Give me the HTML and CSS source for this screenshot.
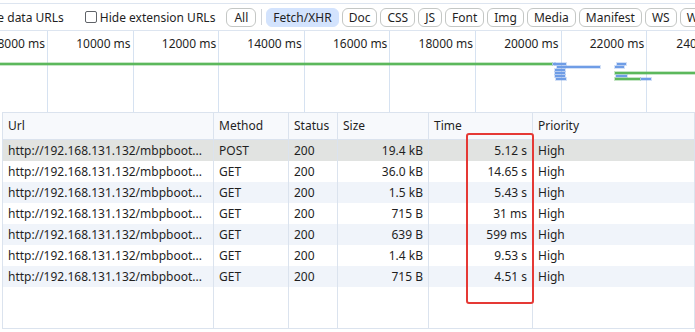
FILE: index.html
```html
<!DOCTYPE html>
<html>
<head>
<meta charset="utf-8">
<link rel="stylesheet" href="styles.css">
</head>
<body>
<div class="panel">
  <div class="toolbar">
    <label class="check first"><span class="box"></span><span>Hide data URLs</span></label>
    <label class="check"><span class="box"></span><span>Hide extension URLs</span></label>
    <span class="chip wide">All</span>
    <span class="sep"></span>
    <span class="chip active">Fetch/XHR</span>
    <span class="chip">Doc</span>
    <span class="chip">CSS</span>
    <span class="chip">JS</span>
    <span class="chip">Font</span>
    <span class="chip">Img</span>
    <span class="chip">Media</span>
    <span class="chip">Manifest</span>
    <span class="chip">WS</span>
    <span class="chip">Wasm</span>
  </div>
  <div class="overview">
    <div class="ruler">
      <div class="tick first"><span>8000 ms</span></div>
      <div class="tick"><span>10000 ms</span></div>
      <div class="tick"><span>12000 ms</span></div>
      <div class="tick"><span>14000 ms</span></div>
      <div class="tick"><span>16000 ms</span></div>
      <div class="tick"><span>18000 ms</span></div>
      <div class="tick"><span>20000 ms</span></div>
      <div class="tick"><span>22000 ms</span></div>
      <div class="tick last"><span>24000 ms</span></div>
    </div>
    <div class="bar green" style="left:0;top:32px;width:552px"></div>
    <div class="bar blue" style="left:553px;top:32px;width:2px"></div>
    <div class="bar blue" style="left:555px;top:32px;width:11px"></div>
    <div class="bar blue" style="left:557px;top:35px;width:43px"></div>
    <div class="bar blue" style="left:555px;top:38px;width:10px"></div>
    <div class="bar blue" style="left:555px;top:41px;width:10px"></div>
    <div class="bar blue" style="left:555px;top:44px;width:10px"></div>
    <div class="bar blue" style="left:556px;top:47px;width:10px"></div>
    <div class="bar blue" style="left:617px;top:32px;width:9px"></div>
    <div class="bar blue" style="left:615px;top:35px;width:9px"></div>
    <div class="bar green" style="left:615px;top:41px;width:80px"></div>
    <div class="bar blue" style="left:616px;top:44px;width:11px"></div>
    <div class="bar green" style="left:615px;top:47px;width:25px"></div>
    <div class="bar blue" style="left:641px;top:47px;width:10px"></div>
  </div>
  <div class="grid-wrap">
    <table class="grid">
      <colgroup>
        <col class="c-url"><col class="c-method"><col class="c-status"><col class="c-size"><col class="c-time"><col>
      </colgroup>
      <thead>
        <tr><th>Url</th><th>Method</th><th>Status</th><th>Size</th><th>Time</th><th>Priority</th></tr>
      </thead>
      <tbody>
        <tr class="selected"><td>http://192.168.131.132/mbpboot...</td><td>POST</td><td>200</td><td class="num">19.4 kB</td><td class="num">5.12 s</td><td>High</td></tr>
        <tr><td>http://192.168.131.132/mbpboot...</td><td>GET</td><td>200</td><td class="num">36.0 kB</td><td class="num">14.65 s</td><td>High</td></tr>
        <tr class="stripe"><td>http://192.168.131.132/mbpboot...</td><td>GET</td><td>200</td><td class="num">1.5 kB</td><td class="num">5.43 s</td><td>High</td></tr>
        <tr><td>http://192.168.131.132/mbpboot...</td><td>GET</td><td>200</td><td class="num">715 B</td><td class="num">31 ms</td><td>High</td></tr>
        <tr class="stripe"><td>http://192.168.131.132/mbpboot...</td><td>GET</td><td>200</td><td class="num">639 B</td><td class="num">599 ms</td><td>High</td></tr>
        <tr><td>http://192.168.131.132/mbpboot...</td><td>GET</td><td>200</td><td class="num">1.4 kB</td><td class="num">9.53 s</td><td>High</td></tr>
        <tr class="stripe"><td>http://192.168.131.132/mbpboot...</td><td>GET</td><td>200</td><td class="num">715 B</td><td class="num">4.51 s</td><td>High</td></tr>
        <tr class="filler"><td></td><td></td><td></td><td></td><td></td><td></td></tr>
      </tbody>
    </table>
    <div class="highlight"></div>
  </div>
</div>
</body>
</html>
```
FILE: styles.css
```css
* { box-sizing: border-box; }
html, body { margin: 0; padding: 0; background: #fff; }
body {
  width: 695px;
  height: 332px;
  overflow: hidden;
  font-family: "Noto Sans", "Noto Sans CJK SC", sans-serif;
  font-size: 12px;
  color: #1f1f1f;
}
.panel { padding-top: 3px; }
.toolbar {
  height: 28px;
  border-top: 1px solid #dde5f0;
  border-bottom: 1px solid #dde5f0;
  display: flex;
  align-items: center;
  white-space: nowrap;
  overflow: hidden;
}
.check { display: flex; align-items: center; gap: 3px; margin-right: 11px; }
.check.first { margin-left: -37px; margin-right: 21px; }
.box {
  width: 12px; height: 12px;
  border: 1px solid #5f6368;
  border-radius: 2px;
  display: inline-block;
}
.chip {
  height: 19px;
  line-height: 17px;
  padding: 0 6px;
  border: 1px solid #c4c7c5;
  border-radius: 6px;
  margin-right: 3px;
  flex: none;
}
.chip.wide { padding: 0 7px; }
.chip.active { background: #d3e3fd; border-color: #d3e3fd; padding: 0 6px; }
.sep { width: 1px; height: 16px; background: #d0d4d9; margin: 0 4px 0 2px; flex: none; }

.overview { position: relative; height: 81px; overflow: hidden; }
.ruler { display: flex; height: 100%; }
.tick {
  flex: none;
  width: 85.6px;
  border-right: 1px solid #d6e2f1;
  display: flex;
  justify-content: flex-end;
  padding: 5px 2px 0 0;
  white-space: nowrap;
  color: #1f1f1f;
  line-height: 16px;
}
.tick.first { width: 48px; }
.tick.last { border-right: 0; }
.bar { position: absolute; height: 2px; }
.bar.green { background: #5cb85c; box-shadow: 0 0 0 1px rgba(92,184,92,0.35); }
.bar.blue { background: #6f9de6; box-shadow: 0 0 0 1px rgba(111,157,230,0.3); }

.grid-wrap { position: relative; }
.grid {
  margin-left: 2px;
  width: 693px;
  border-collapse: collapse;
  table-layout: fixed;
  border-top: 1px solid #dbe3ee;
  border-bottom: 1px solid #dbe3ee;
  border-left: 1px solid #dbe3ee;
}
.c-url { width: 211px; }
.c-method { width: 75px; }
.c-status { width: 49px; }
.c-size { width: 91px; }
.c-time { width: 104px; }
.grid th, .grid td {
  border-right: 1px solid #dbe3ee;
  padding: 0 5px;
  text-align: left;
  white-space: nowrap;
  overflow: hidden;
  font-weight: normal;
}
.grid th {
  height: 27px;
  padding-bottom: 2px;
  background: #f7f9fc;
  border-bottom: 1px solid #dbe3ee;
}
.grid td { height: 21px; }
.grid td.num { text-align: right; }
.grid tr.selected td { background: #e1e3e1; }
.grid tr.stripe td { background: #f0f4fa; }
.grid tr.filler td { height: 42px; }
.highlight {
  position: absolute;
  left: 466px;
  top: 21px;
  width: 68px;
  height: 171px;
  border: 2px solid #e53935;
  border-radius: 3px;
}
```
